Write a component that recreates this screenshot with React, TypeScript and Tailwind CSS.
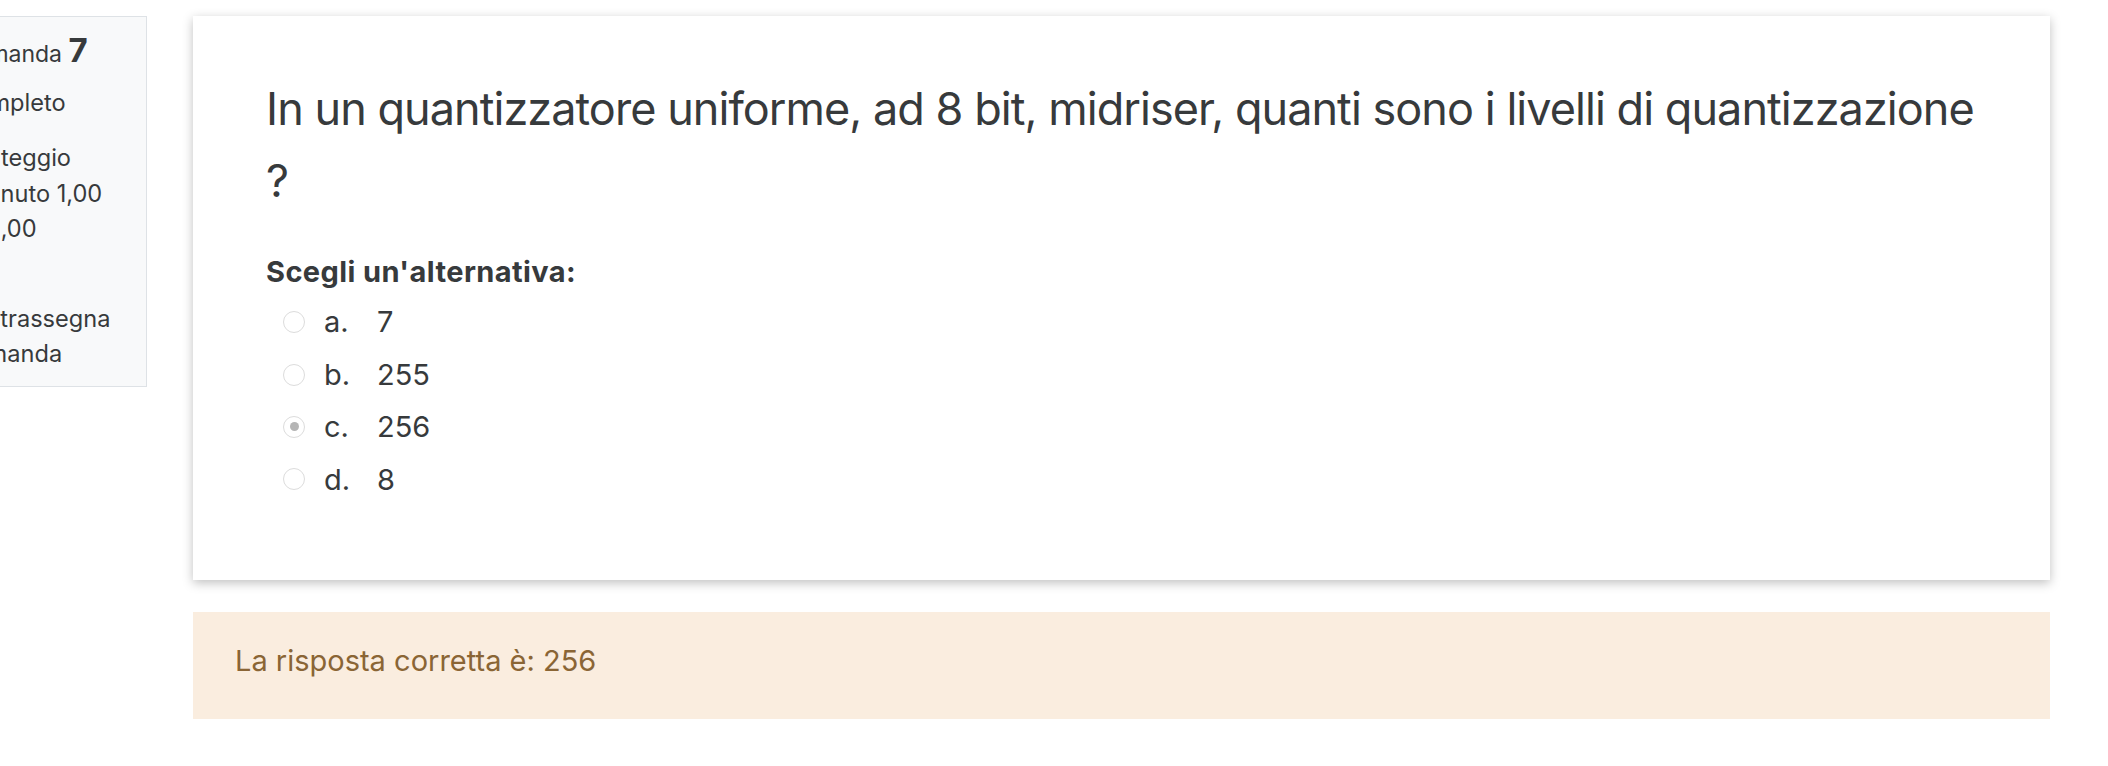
const font = { fontFamily: "Inter, 'Noto Sans', 'Liberation Sans', sans-serif" };

const answers = [
  { letter: "a.", value: "7", checked: false },
  { letter: "b.", value: "255", checked: false },
  { letter: "c.", value: "256", checked: true },
  { letter: "d.", value: "8", checked: false },
];

function Radio({ checked }: { checked: boolean }) {
  return (
    <span className="flex items-center justify-center w-[22px] h-[22px] rounded-full border border-[#dcdcdc] bg-white shrink-0">
      {checked && <span className="w-[9px] h-[9px] rounded-full bg-[#b5b5b5]" />}
    </span>
  );
}

export default function App() {
  return (
    <div className="w-[2108px] h-[766px] bg-white overflow-hidden text-[#373a3c]" style={font}>
      <div className="flex items-start pt-[16px]">
        {/* Info panel, cut by the left edge */}
        <div className="shrink-0 w-[201px] ml-[-54px] h-[371px] bg-[#f8f9fa] border border-[#dee2e6] pl-[11px] pt-[16px] text-[23.6px] leading-[35.5px] whitespace-nowrap">
          <div className="text-[23px]">
            Domanda <span className="text-[33px] font-bold">7</span>
          </div>
          <div className="mt-[12px]">Completo</div>
          <div className="mt-[20px]">
            Punteggio
            <br />
            ottenuto 1,00
            <br />
            su 1,00
          </div>
          <div className="mt-[54px]">
            <span className="ml-[-3px]">Contrassegna</span>
            <br />
            domanda
          </div>
        </div>

        {/* Question */}
        <div className="ml-[46px] w-[1857px] flex flex-col">
          <div className="bg-white shadow-[0_3px_10px_rgba(0,0,0,0.25)] pl-[73px] pr-[73px] pt-[57px] pb-[74px]">
            <div className="text-[45px] leading-[72px] tracking-[-0.95px]">
              In un quantizzatore uniforme, ad 8 bit, midriser, quanti sono i livelli di quantizzazione ?
            </div>
            <div className="mt-[35px] text-[29px] leading-[40px] font-bold tracking-[0.4px]">
              Scegli un'alternativa:
            </div>
            <div className="mt-[4px] flex flex-col">
              {answers.map((a) => (
                <div key={a.letter} className="h-[52.4px] flex items-center pl-[17px] text-[29px]">
                  <Radio checked={a.checked} />
                  <span className="ml-[19px] w-[53px]">{a.letter}</span>
                  <span>{a.value}</span>
                </div>
              ))}
            </div>
          </div>

          <div className="mt-[32px] bg-[#faeddf] pl-[42px] pt-[29px] pb-[38px] text-[29px] leading-[40px] text-[#8a6535]">
            La risposta corretta è: 256
          </div>
        </div>
      </div>
    </div>
  );
}
